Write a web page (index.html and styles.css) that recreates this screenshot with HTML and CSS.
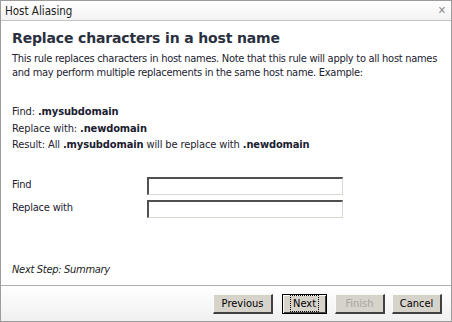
FILE: index.html
```html
<!DOCTYPE html>
<html>
<head>
<meta charset="utf-8">
<link rel="stylesheet" href="styles.css">
</head>
<body>
<div class="dialog">
  <div class="titlebar">
    <span class="title">Host Aliasing</span>
    <span class="close">&#x2715;</span>
  </div>
  <div class="content">
    <h1 class="heading">Replace characters in a host name</h1>
    <p class="intro">This rule replaces characters in host names. Note that this rule will apply to all host names and may perform multiple replacements in the same host name. Example:</p>
    <div class="example">
      <div>Find: <b>.mysubdomain</b></div>
      <div>Replace with: <b>.newdomain</b></div>
      <div>Result: All <b>.mysubdomain</b> will be replace with <b>.newdomain</b></div>
    </div>
    <div class="form">
      <label class="lbl">Find</label><input class="field" type="text">
      <label class="lbl">Replace with</label><input class="field" type="text">
    </div>
    <div class="next">Next Step: Summary</div>
  </div>
  <div class="footer">
    <button class="btn prev">Previous</button>
    <button class="btn default"><span class="focus">Next</span></button>
    <button class="btn disabled">Finish</button>
    <button class="btn cancel">Cancel</button>
  </div>
</div>
</body>
</html>
```
FILE: styles.css
```css
* { box-sizing: border-box; }
html, body { margin: 0; padding: 0; background: #fff; }
body {
  font-family: "DejaVu Sans Condensed", "DejaVu Sans", sans-serif;
  font-stretch: condensed;
  font-size: 11px;
  color: #1c2230;
}
.dialog {
  width: 452px;
  height: 322px;
  border: 1px solid #9c9c9c;
  display: flex;
  flex-direction: column;
  background: #fff;
}
.titlebar {
  height: 20px;
  flex: none;
  display: flex;
  align-items: center;
  justify-content: space-between;
  padding: 0 5px 0 4px;
  border-bottom: 1px solid #c4c4c4;
  background: linear-gradient(#ffffff, #f3f3f3);
  color: #222;
  font-size: 11.5px;
}
.close { color: #8a8a8a; font-size: 11px; font-stretch: normal; }
.content {
  flex: 1;
  min-height: 0;
  overflow: hidden;
  padding: 8px 11px 0 11px;
}
.heading {
  margin: 0;
  font-size: 14px;
  font-weight: bold;
  color: #2a3040;
  line-height: 18px;
  font-stretch: normal;
  font-family: "DejaVu Sans", sans-serif;
  letter-spacing: -0.15px;
}
.intro {
  margin: 5px 0 0 0;
  line-height: 14px;
  letter-spacing: -0.28px;
}
.example {
  margin-top: 24px;
  line-height: 16.5px;
  letter-spacing: -0.12px;
}
.example b { color: #1a2030; }
.form {
  margin-top: 23px;
  display: grid;
  grid-template-columns: 135px 196px;
  row-gap: 5px;
  align-items: center;
}
.lbl { letter-spacing: -0.2px; align-self: start; padding-top: 1px; }
.field {
  height: 18px;
  width: 196px;
  border-top: 2px solid #505050;
  border-left: 2px solid #505050;
  border-right: 1px solid #d8d8d0;
  border-bottom: 1px solid #d8d8d0;
  background: #fff;
  padding: 0;
  margin: 0;
}
.next {
  margin-top: 45px;
  font-style: italic;
  color: #222;
  letter-spacing: -0.3px;
}
.footer {
  flex: none;
  height: 36px;
  border-top: 1px solid #b0b0b0;
  background: linear-gradient(#ffffff, #f0f0f0);
  display: flex;
  justify-content: flex-end;
  align-items: center;
  padding: 0 9px 0 0;
}
.btn {
  font-family: "DejaVu Sans Condensed", "DejaVu Sans", sans-serif;
  font-stretch: condensed;
  font-size: 11px;
  color: #000;
  height: 20px;
  padding: 0;
  background: #d6d3cb;
  border-top: 1px solid #fbfbf8;
  border-left: 1px solid #fbfbf8;
  border-right: 2px solid #404040;
  border-bottom: 2px solid #404040;
  margin: 0 0 0 8px;
  width: 50px;
}
.btn.prev { width: 60px; }
.btn.cancel { width: 50px; margin-left: 7px; }
.btn.default {
  width: 45px;
  border: 1px solid #000;
  box-shadow: inset 1px 1px 0 #fbfbf8, inset -1px -1px 0 #404040;
  margin-left: 9px;
}
.focus { outline: 1px dotted #000; padding: 1px 2px; }
.btn.disabled { color: #a8a6a0; }
```
